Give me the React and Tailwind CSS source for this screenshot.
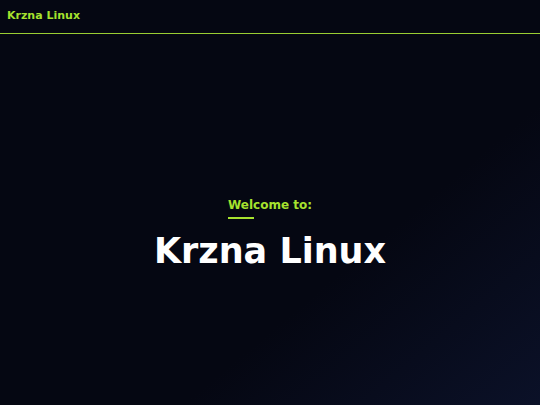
export default function App() {
  return (
    <div
      className="relative flex h-[405px] w-[540px] flex-col overflow-hidden bg-[#050712] text-white"
      style={{ fontFamily: '"DejaVu Sans", sans-serif' }}
    >
      <div className="pointer-events-none absolute inset-0 bg-[linear-gradient(140deg,transparent_65%,#0b1128_100%)]" />
      <header className="relative flex h-[33px] items-center px-[7px]">
        <span className="text-[11px] font-bold text-[#a6e22e]">Krzna Linux</span>
      </header>
      <div className="relative h-px w-full bg-[#9acd32]" />
      <main className="relative flex flex-1 flex-col items-center justify-center pt-[26px]">
        <div className="flex flex-col items-start">
          <p className="text-[12px] font-bold text-[#a6e22e]">Welcome to:</p>
          <div className="mt-[3px] h-[2px] w-[26px] bg-[#a6e22e]" />
        </div>
        <h1 className="mt-[15px] text-[35px] font-bold leading-none">Krzna Linux</h1>
      </main>
    </div>
  );
}
